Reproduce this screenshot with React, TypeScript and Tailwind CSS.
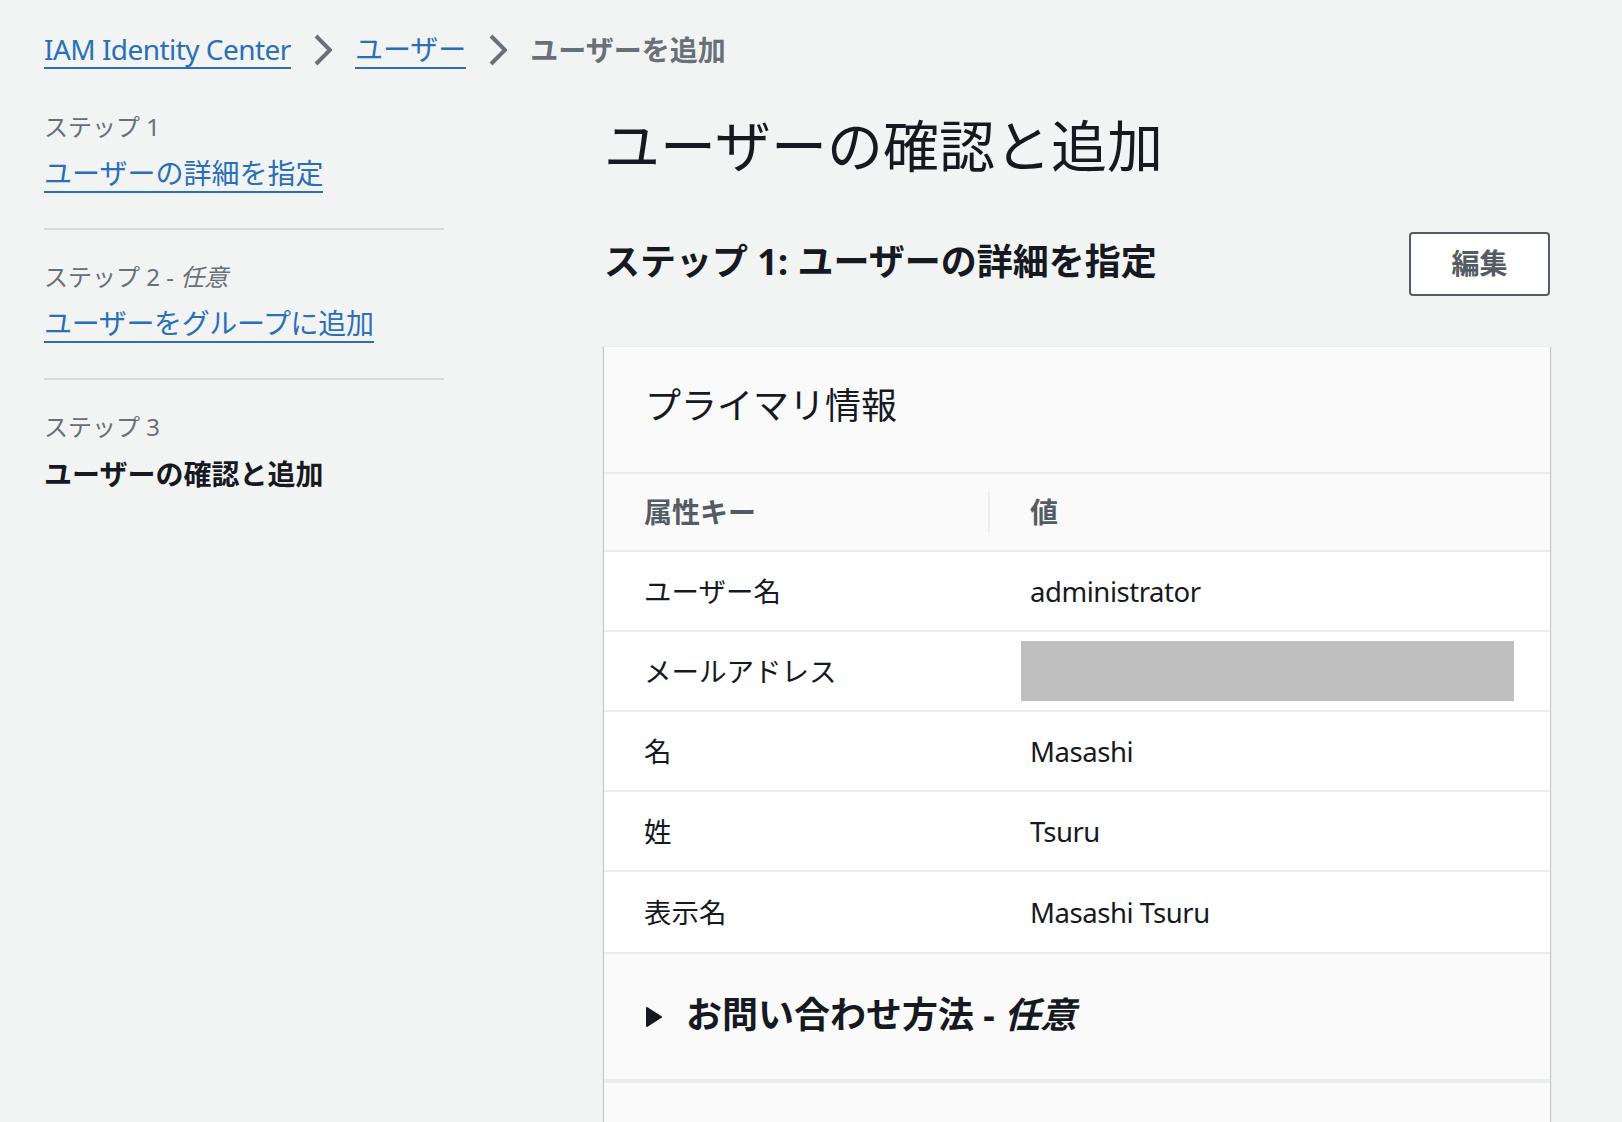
import { ReactNode } from 'react';

const font = 'font-["Noto_Sans","Noto_Sans_CJK_JP",sans-serif]';

const rows: { label: string; value?: string; tall?: boolean }[] = [
  { label: 'ユーザー名', value: 'administrator' },
  { label: 'メールアドレス' },
  { label: '名', value: 'Masashi' },
  { label: '姓', value: 'Tsuru' },
  { label: '表示名', value: 'Masashi Tsuru', tall: true },
];

function Crumb({ children }: { children: ReactNode }) {
  return (
    <a className="border-b-2 border-[#2a6fb8] leading-[36px] text-[#2a6fb8]">{children}</a>
  );
}

function Chevron() {
  return (
    <svg className="mx-[23px] h-[32px] w-[18px]" viewBox="0 0 18 32" fill="none">
      <path d="M2 2l14 14L2 30" stroke="#687078" strokeWidth="4" />
    </svg>
  );
}

function Step({ label, children, last }: { label: ReactNode; children: ReactNode; last?: boolean }) {
  return (
    <div className="h-[150px]">
      <div className="h-[38px] text-[24px] leading-[38px] text-[#687078]">{label}</div>
      <div className="mt-[9px] flex h-[38px] text-[28px] leading-[38px]">{children}</div>
      {!last && <div className="mt-[35px] border-b-2 border-[#d5dbdb]" />}
    </div>
  );
}

export default function App() {
  return (
    <div className={`${font} h-[1122px] w-[1622px] overflow-hidden bg-[#f2f3f3] text-[#16191f]`}>
      <nav className="flex h-[100px] items-center pl-[44px] text-[28px]">
        <Crumb>
          <span className="tracking-[-0.54px]">IAM Identity Center</span>
        </Crumb>
        <Chevron />
        <Crumb>ユーザー</Crumb>
        <Chevron />
        <span className="font-bold text-[#687078]">ユーザーを追加</span>
      </nav>
      <div className="flex">
        <aside className="ml-[44px] w-[400px] pt-[8px]">
          <Step label="ステップ 1">
            <Crumb>ユーザーの詳細を指定</Crumb>
          </Step>
          <Step label={<>ステップ 2 - <i>任意</i></>}>
            <Crumb>
              <span className="tracking-[-0.35px]">ユーザーをグループに追加</span>
            </Crumb>
          </Step>
          <Step label="ステップ 3" last>
            <b>ユーザーの確認と追加</b>
          </Step>
        </aside>
        <main className="ml-[160px] w-[946px]">
          <h1 className="text-[56px] font-normal leading-[90px]">ユーザーの確認と追加</h1>
          <div className="mt-[42px] flex h-[73px] items-start justify-between">
            <h2 className="text-[36px] font-bold leading-[60px]">ステップ 1: ユーザーの詳細を指定</h2>
            <button className="h-[64px] w-[141px] rounded-[4px] border-2 border-[#545b64] bg-white pb-[2px] text-[28px] font-bold text-[#545b64]">
              編集
            </button>
          </div>
          <section className="mt-[41px] border-t border-[#eaeded] bg-[#fafafa] shadow-[0_1px_1px_0_rgba(0,28,36,0.3),1px_1px_1px_0_rgba(0,28,36,0.15),-1px_1px_1px_0_rgba(0,28,36,0.15)]">
            <div className="flex h-[127px] items-start border-b-2 border-[#eaeded] px-[41px] pt-[31px]">
              <h3 className="text-[36px] font-normal leading-[56px]">プライマリ情報</h3>
            </div>
            <div className="flex h-[78px] items-center border-b-2 border-[#eaeded] text-[28px] font-bold text-[#545b64]">
              <div className="w-[386px] border-r-2 border-[#eaeded] pl-[40px] leading-[40px]">属性キー</div>
              <div className="pl-[40px]">値</div>
            </div>
            {rows.map((row) => (
              <div
                key={row.label}
                className={`flex items-center border-b-2 border-[#eaeded] bg-white text-[27.5px] ${row.tall ? 'h-[82px]' : 'h-[80px]'}`}
              >
                <div className="w-[387px] pl-[40px] pt-[1px]">{row.label}</div>
                {row.value ? (
                  <div className="pl-[39px] pt-[1px] tracking-[-0.45px]">{row.value}</div>
                ) : (
                  <div className="ml-[30px] h-[60px] w-[493px] bg-[#bfbfbf]" />
                )}
              </div>
            ))}
            <div className="flex h-[129px] items-center border-b-4 border-[#eaeded] pl-[42px] text-[36px] font-bold">
              <svg className="mr-[24px] h-[20px] w-[16px]" viewBox="0 0 16 20">
                <path d="M1 1l14 9L1 19z" fill="#16191f" stroke="#16191f" strokeWidth="2" strokeLinejoin="round" />
              </svg>
              <span className="pb-[4px]">お問い合わせ方法 - <i>任意</i></span>
            </div>
            <div className="h-[80px]" />
          </section>
        </main>
      </div>
    </div>
  );
}
